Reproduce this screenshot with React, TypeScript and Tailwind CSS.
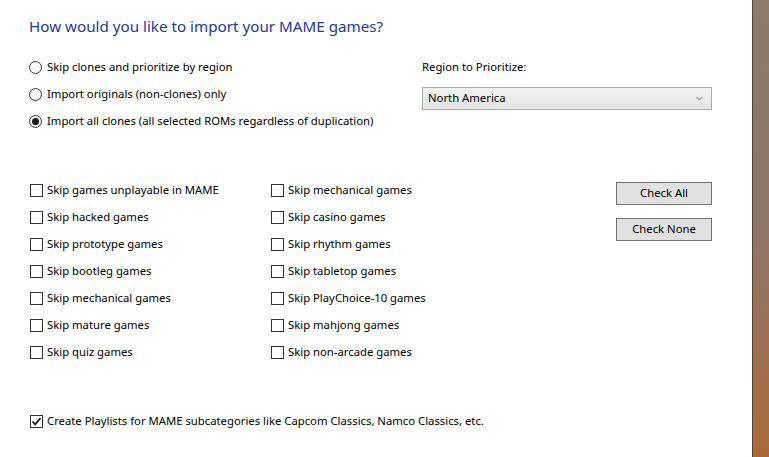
import React, { useState } from "react";

const FONT = { fontFamily: '"Noto Sans", "Open Sans", sans-serif' };

const leftOptions = [
  "Skip games unplayable in MAME",
  "Skip hacked games",
  "Skip prototype games",
  "Skip bootleg games",
  "Skip mechanical games",
  "Skip mature games",
  "Skip quiz games",
];

const rightOptions = [
  "Skip mechanical games",
  "Skip casino games",
  "Skip rhythm games",
  "Skip tabletop games",
  "Skip PlayChoice-10 games",
  "Skip mahjong games",
  "Skip non-arcade games",
];

const radios = [
  "Skip clones and prioritize by region",
  "Import originals (non-clones) only",
  "Import all clones (all selected ROMs regardless of duplication)",
];

function Radio({ label, checked, onClick }: { label: string; checked: boolean; onClick: () => void }) {
  return (
    <div className="flex h-[27px] items-center cursor-default" onClick={onClick}>
      <span className="flex h-[13px] w-[13px] items-center justify-center rounded-full border border-[#333333] bg-white">
        {checked && <span className="h-[7px] w-[7px] rounded-full bg-[#1a1a1a]" />}
      </span>
      <span className="ml-[5px] text-[11.3px] text-black">{label}</span>
    </div>
  );
}

function Check({ label, checked, onClick }: { label: string; checked: boolean; onClick: () => void }) {
  return (
    <div className="flex h-[27px] items-center cursor-default" onClick={onClick}>
      <span className="ml-[1px] flex h-[13px] w-[13px] items-center justify-center border border-[#333333] bg-white">
        {checked && (
          <svg width="11" height="11" viewBox="0 0 11 11">
            <path d="M1.5 5.5 L4.2 8.3 L9.5 2" fill="none" stroke="#1a1a1a" strokeWidth="1.8" />
          </svg>
        )}
      </span>
      <span className="ml-[4px] text-[11.3px] text-black">{label}</span>
    </div>
  );
}

export default function App() {
  const [mode, setMode] = useState(2);
  const [left, setLeft] = useState<boolean[]>(leftOptions.map(() => false));
  const [right, setRight] = useState<boolean[]>(rightOptions.map(() => false));
  const [playlists, setPlaylists] = useState(true);

  const setAll = (v: boolean) => {
    setLeft(leftOptions.map(() => v));
    setRight(rightOptions.map(() => v));
  };

  return (
    <div className="flex h-[457px] w-[769px] overflow-hidden" style={FONT}>
      <div className="h-full w-[752px] bg-white pl-[29px] pt-[15px]">
        <div className="h-[22px] text-[15.2px] leading-[22px] text-[#1e3799]">
          How would you like to import your MAME games?
        </div>

        <div className="mt-[17px] flex">
          <div className="w-[393px]">
            {radios.map((r, i) => (
              <Radio key={r} label={r} checked={mode === i} onClick={() => setMode(i)} />
            ))}
          </div>
          <div>
            <div className="flex h-[27px] items-center text-[11.3px] text-black">Region to Prioritize:</div>
            <div className="mt-[6px] flex h-[23px] w-[290px] items-center justify-between border border-[#acacac] bg-gradient-to-b from-[#f2f2f2] to-[#e5e5e5] pl-[5px] pr-[8px]">
              <span className="text-[11.3px] text-black">North America</span>
              <svg width="7" height="5" viewBox="0 0 7 5">
                <path d="M0.5 1 L3.5 4 L6.5 1" fill="none" stroke="#707070" strokeWidth="1" />
              </svg>
            </div>
          </div>
        </div>

        <div className="mt-[42px] flex">
          <div className="w-[241px]">
            {leftOptions.map((o, i) => (
              <Check
                key={o}
                label={o}
                checked={left[i]}
                onClick={() => setLeft(left.map((v, j) => (j === i ? !v : v)))}
              />
            ))}
          </div>
          <div className="w-[346px]">
            {rightOptions.map((o, i) => (
              <Check
                key={o}
                label={o}
                checked={right[i]}
                onClick={() => setRight(right.map((v, j) => (j === i ? !v : v)))}
              />
            ))}
          </div>
          <div className="mt-[5px] flex flex-col gap-[13px]">
            <button
              className="h-[23px] w-[96px] border border-[#707070] bg-[#e1e1e1] text-[11.3px] text-black"
              onClick={() => setAll(true)}
            >
              Check All
            </button>
            <button
              className="h-[23px] w-[96px] border border-[#707070] bg-[#e1e1e1] text-[11.3px] text-black"
              onClick={() => setAll(false)}
            >
              Check None
            </button>
          </div>
        </div>

        <div className="mt-[42px]">
          <Check
            label="Create Playlists for MAME subcategories like Capcom Classics, Namco Classics, etc."
            checked={playlists}
            onClick={() => setPlaylists(!playlists)}
          />
        </div>
      </div>
      <div className="h-full w-[17px] border-l border-[#4a4540] bg-gradient-to-b from-[#8a7b6c] via-[#8f7668] to-[#a96a3a]" />
    </div>
  );
}
